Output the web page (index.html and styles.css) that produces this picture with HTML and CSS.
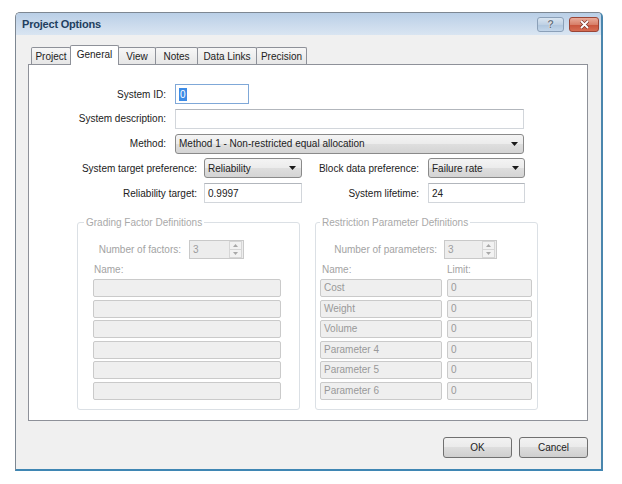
FILE: index.html
```html
<!DOCTYPE html>
<html>
<head>
<meta charset="utf-8">
<title>Project Options</title>
<link rel="stylesheet" href="styles.css">
</head>
<body>
<div class="window">
  <div class="titlebar">
    <span class="title">Project Options</span>
    <div class="caption">
      <span class="cbtn help">?</span>
      <span class="cbtn close">
        <svg width="11" height="9" viewBox="0 0 11 9"><path d="M2 1 L9 8 M9 1 L2 8" stroke="#7a3328" stroke-width="3.2" fill="none"/><path d="M2 1 L9 8 M9 1 L2 8" stroke="#fff" stroke-width="1.8" fill="none"/></svg>
      </span>
    </div>
  </div>
  <div class="client">
    <div class="tabs">
      <span class="tab w-project">Project</span>
      <span class="tab active w-general">General</span>
      <span class="tab w-view">View</span>
      <span class="tab w-notes">Notes</span>
      <span class="tab w-links">Data Links</span>
      <span class="tab w-precision">Precision</span>
    </div>
    <div class="panel">
      <div class="row">
        <span class="lbl la">System ID:</span>
        <span class="edit focus w-id"><span class="sel">0</span></span>
      </div>
      <div class="row">
        <span class="lbl la">System description:</span>
        <span class="edit w-wide"></span>
      </div>
      <div class="row">
        <span class="lbl la">Method:</span>
        <span class="combo w-wide">Method 1 - Non-restricted equal allocation<svg class="arrow" width="7" height="4" viewBox="0 0 7 4"><path d="M0 0 H7 L3.5 4 Z" fill="#1a1a1a"/></svg></span>
      </div>
      <div class="row">
        <span class="lbl lb">System target preference:</span>
        <span class="combo w-s1">Reliability<svg class="arrow" width="7" height="4" viewBox="0 0 7 4"><path d="M0 0 H7 L3.5 4 Z" fill="#1a1a1a"/></svg></span>
        <span class="lbl lc">Block data preference:</span>
        <span class="combo w-s2">Failure rate<svg class="arrow" width="7" height="4" viewBox="0 0 7 4"><path d="M0 0 H7 L3.5 4 Z" fill="#1a1a1a"/></svg></span>
      </div>
      <div class="row last">
        <span class="lbl lb">Reliability target:</span>
        <span class="edit w-s1">0.9997</span>
        <span class="lbl lc">System lifetime:</span>
        <span class="edit w-s2">24</span>
      </div>

      <div class="groups">
        <div class="group">
          <span class="legend lg-left">Grading Factor Definitions</span>
          <div class="spinrow">
            <span class="lbl dis ls1">Number of factors:</span>
            <span class="spin w-sp1"><span class="spin-val">3</span>
              <span class="spin-btns">
                <span class="sb"><svg width="5" height="3" viewBox="0 0 5 3"><path d="M0 3 L2.5 0 L5 3Z" fill="#a8a8a8"/></svg></span>
                <span class="sb"><svg width="5" height="3" viewBox="0 0 5 3"><path d="M0 0 L2.5 3 L5 0Z" fill="#a8a8a8"/></svg></span>
              </span>
            </span>
          </div>
          <div class="hdr hdr-left"><span class="dis">Name:</span></div>
          <div class="flist">
            <span class="fld"></span>
            <span class="fld"></span>
            <span class="fld"></span>
            <span class="fld"></span>
            <span class="fld"></span>
            <span class="fld"></span>
          </div>
        </div>

        <div class="group">
          <span class="legend lg-right">Restriction Parameter Definitions</span>
          <div class="spinrow">
            <span class="lbl dis ls2">Number of parameters:</span>
            <span class="spin w-sp2"><span class="spin-val">3</span>
              <span class="spin-btns">
                <span class="sb"><svg width="5" height="3" viewBox="0 0 5 3"><path d="M0 3 L2.5 0 L5 3Z" fill="#a8a8a8"/></svg></span>
                <span class="sb"><svg width="5" height="3" viewBox="0 0 5 3"><path d="M0 0 L2.5 3 L5 0Z" fill="#a8a8a8"/></svg></span>
              </span>
            </span>
          </div>
          <div class="hdr hdr-right"><span class="dis c-name">Name:</span><span class="dis">Limit:</span></div>
          <div class="pgrid">
            <span class="fld">Cost</span><span class="fld">0</span>
            <span class="fld">Weight</span><span class="fld">0</span>
            <span class="fld">Volume</span><span class="fld">0</span>
            <span class="fld">Parameter 4</span><span class="fld">0</span>
            <span class="fld">Parameter 5</span><span class="fld">0</span>
            <span class="fld">Parameter 6</span><span class="fld">0</span>
          </div>
        </div>
      </div>
    </div>
    <div class="footer">
      <button class="btn">OK</button>
      <button class="btn">Cancel</button>
    </div>
  </div>
</div>
</body>
</html>
```

FILE: styles.css
```css
* { box-sizing: border-box; }

body {
  margin: 0;
  background: #ffffff;
  font-family: "Liberation Sans", Arial, sans-serif;
  font-size: 10px;
  color: #1a1a1a;
}

.window {
  margin: 12px 0 0 15px;
  width: 588px;
  height: 459px;
  background: #f0f0f0;
  border: 1px solid #7d8792;
  border-right: 2px solid #4a86ad;
  border-bottom: 2px solid #3f86b3;
  border-radius: 5px 5px 0 0;
  display: flex;
  flex-direction: column;
}

.titlebar {
  height: 22px;
  flex: none;
  display: flex;
  align-items: center;
  padding: 0 2px 0 6px;
  background: linear-gradient(#b9cfe7, #cddced 60%, #d9e5f2);
  border-radius: 4px 4px 0 0;
}

.title {
  font-size: 11px;
  font-weight: bold;
  color: #223f60;
  letter-spacing: -0.2px;
}

.caption {
  margin-left: auto;
  display: flex;
  gap: 5px;
}

.cbtn {
  height: 15px;
  border-radius: 3px;
  display: flex;
  align-items: center;
  justify-content: center;
}

.help {
  width: 27px;
  border: 1px solid #8ba0b8;
  background: linear-gradient(#d9e5f1, #bfd1e4 50%, #aec5dd 51%, #c3d6ea);
  color: #6a7786;
  font-weight: bold;
  font-size: 11px;
  text-shadow: 0 0 1px #ffffff, 0 0 1px #ffffff;
}

.close {
  width: 30px;
  border: 1px solid #9a4536;
  background: linear-gradient(#e9ab9a, #d8806a 50%, #c8533b 51%, #d66d53);
}

.client {
  flex: 1;
  padding: 10px 13px 0 12px;
}

.tabs {
  display: flex;
  align-items: flex-end;
  height: 19px;
  padding-left: 3px;
  position: relative;
  z-index: 1;
}

.tab {
  height: 17px;
  border: 1px solid #8e9199;
  border-bottom: none;
  margin-right: -1px;
  background: linear-gradient(#f7f7f7, #e6e6e6);
  display: flex;
  align-items: center;
  justify-content: center;
  color: #222;
  border-radius: 2px 2px 0 0;
}

.tab.active {
  height: 20px;
  margin-bottom: -1px;
  background: #ffffff;
  position: relative;
  z-index: 2;
  padding-bottom: 3px;
}

.w-project { width: 40px; }
.w-general { width: 49px; }
.w-view { width: 38px; }
.w-notes { width: 43px; }
.w-links { width: 60px; }
.w-precision { width: 51px; }

.panel {
  width: 560px;
  height: 357px;
  border: 1px solid #8e9199;
  background: #ffffff;
  padding-top: 19px;
}

.row {
  display: flex;
  align-items: center;
  height: 20px;
  margin-bottom: 4.75px;
}

.row.last { margin-bottom: 0; }

.lbl {
  flex: none;
  text-align: right;
  color: #222;
}

.la { width: 137px; margin-right: 9px; }
.lb { width: 168px; margin-right: 7px; }
.lc { width: 117px; margin-right: 9px; }

.edit {
  height: 20px;
  border: 1px solid #d2d6db;
  border-top-color: #b2b6bc;
  background: #fff;
  padding: 0 3px;
  display: flex;
  align-items: center;
  color: #222;
}

.edit.focus {
  border-color: #7fa8d8;
}

.sel {
  background: #3c8be6;
  color: #fff;
  padding: 0 1px;
  line-height: 13px;
}

.w-id { width: 74px; }
.w-wide { width: 349px; }
.w-s1 { width: 98px; }
.w-s2 { width: 97px; }

.combo {
  height: 20px;
  border: 1px solid #8a8a8a;
  border-radius: 3px;
  background: linear-gradient(#f4f4f4, #ececec 48%, #dedede 52%, #d4d4d4);
  display: flex;
  align-items: center;
  padding-left: 3px;
  color: #222;
}

.arrow {
  margin-left: auto;
  margin-right: 5px;
  flex: none;
}

.groups {
  display: flex;
  gap: 15px;
  margin: 19px 0 0 48px;
}

.group {
  width: 223px;
  height: 188px;
  border: 1px solid #dbe0e5;
  border-radius: 3px;
}

.legend {
  display: block;
  width: max-content;
  margin-top: -7px;
  padding: 0 2px;
  background: #fff;
  color: #a9a9a9;
  line-height: 13px;
  height: 13px;
}

.lg-left { margin-left: 6px; }
.lg-right { margin-left: 4px; }

.dis { color: #a3a3a3; }

.spinrow {
  display: flex;
  align-items: center;
  height: 19px;
  margin-top: 11px;
}

.ls1 { width: 103px; margin-right: 8px; }
.ls2 { width: 121px; margin-right: 7px; }

.spin {
  height: 19px;
  border: 1px solid #c9c9c9;
  background: #ededed;
  display: flex;
  align-items: center;
  color: #9c9c9c;
  padding-left: 3px;
}

.w-sp1 { width: 55px; }
.w-sp2 { width: 53px; }

.spin-val { flex: 1; }

.spin-btns {
  width: 13px;
  height: 17px;
  display: flex;
  flex-direction: column;
  margin-right: 1px;
}

.sb {
  flex: 1;
  display: flex;
  align-items: center;
  justify-content: center;
  border: 1px solid #d6d6d6;
  background: #f2f2f2;
}

.sb + .sb { border-top: none; }

.hdr {
  display: flex;
  height: 13px;
  line-height: 13px;
  margin: 4px 0 3px;
}

.hdr-left { padding-left: 16px; }
.hdr-right { padding-left: 6px; }
.c-name { width: 125px; }

.fld {
  height: 18px;
  border: 1px solid #cacaca;
  border-radius: 2px;
  background: #efefef;
  color: #999999;
  padding-left: 3px;
  line-height: 16px;
  display: block;
}

.flist {
  margin-left: 15px;
  width: 188px;
  display: flex;
  flex-direction: column;
  gap: 2.6px;
}

.pgrid {
  margin-left: 4px;
  display: grid;
  grid-template-columns: 122px 85px;
  column-gap: 5px;
  row-gap: 2.6px;
}

.footer {
  display: flex;
  justify-content: flex-end;
  gap: 7px;
  margin-top: 16px;
}

.btn {
  width: 69px;
  height: 21px;
  border: 1px solid #707070;
  border-radius: 3px;
  background: linear-gradient(#f2f2f2, #ebebeb 45%, #dddddd 50%, #cfcfcf);
  font-family: "Liberation Sans", Arial, sans-serif;
  font-size: 10px;
  color: #222;
  padding: 0;
}
```
